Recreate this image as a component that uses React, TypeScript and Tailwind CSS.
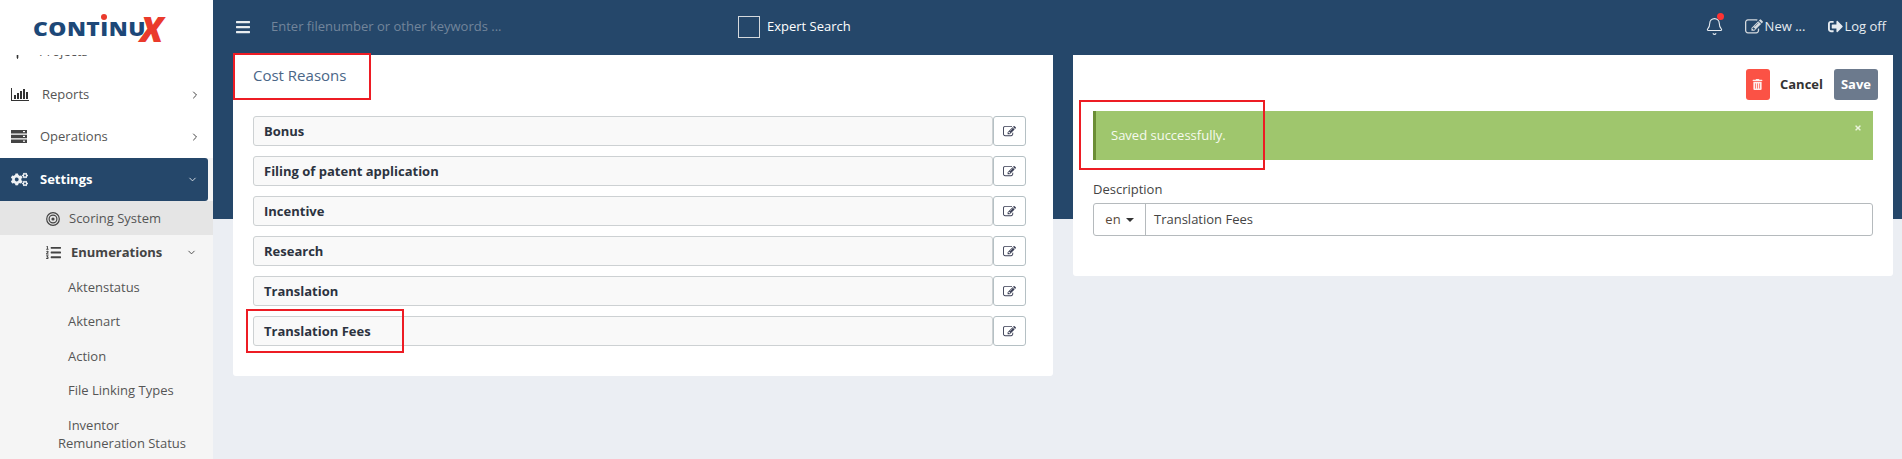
import React from "react";
import { FaBars, FaCogs, FaListOl, FaSignOutAlt, FaThumbtack, FaTrashAlt, FaTimes } from "react-icons/fa";
import { Bell, ChevronDown, ChevronRight } from "lucide-react";

const font = { fontFamily: '"Open Sans", sans-serif' };

function PencilSquare({ size, className }: { size: number; className?: string }) {
  return (
    <svg width={size} height={size} viewBox="0 0 1792 1792" fill="currentColor" className={className}>
      <path d="M888 1184l116-116-152-152-116 116v56h96v96h56zm440-720q-16-16-33 1l-350 350q-17 17-1 33t33-1l350-350q17-17 1-33zm80 594v190q0 119-84.5 203.5t-203.5 84.5h-832q-119 0-203.5-84.5t-84.5-203.5v-832q0-119 84.5-203.5t203.5-84.5h832q63 0 117 25 15 7 18 23 3 17-9 29l-49 49q-14 14-32 8-23-6-45-6h-832q-66 0-113 47t-47 113v832q0 66 47 113t113 47h832q66 0 113-47t47-113v-126q0-13 9-22l64-64q15-15 35-7t20 29zm-96-738l288 288-672 672h-288v-288zm444 132l-92 92-288-288 92-92q28-28 68-28t68 28l152 152q28 28 28 68t-28 68z" />
    </svg>
  );
}

function BarsIcon() {
  return (
    <svg width="18" height="13" viewBox="0 0 18 13" className="text-[#333]" fill="currentColor">
      <path d="M0 0h1v12h17v1H0z" />
      <rect x="3" y="7" width="2" height="4" />
      <rect x="6" y="5" width="2" height="6" />
      <rect x="9" y="3" width="2" height="8" />
      <rect x="12" y="1" width="2" height="10" />
      <rect x="15" y="4" width="2" height="7" />
    </svg>
  );
}

function ServerIcon() {
  return (
    <svg width="16" height="13" viewBox="0 0 16 13" className="text-[#444]" fill="currentColor">
      <path d="M0 0h16v3.5H0zM0 4.7h16v3.5H0zM0 9.4h16V13H0z" />
      <rect x="12" y="1" width="2" height="1.2" fill="#fff" />
      <rect x="12" y="5.8" width="2" height="1.2" fill="#fff" />
      <rect x="12" y="10.6" width="2" height="1.2" fill="#fff" />
    </svg>
  );
}

function TargetIcon() {
  return (
    <svg width="14" height="14" viewBox="0 0 14 14" fill="none" stroke="#444">
      <circle cx="7" cy="7" r="6.3" strokeWidth="1.2" />
      <circle cx="7" cy="7" r="3.9" strokeWidth="1.2" />
      <circle cx="7" cy="7" r="1.6" fill="#444" stroke="none" />
    </svg>
  );
}

function Logo() {
  return (
    <div className="h-[55px] shrink-0 bg-white flex items-center pl-[33px]">
      <div className="relative flex items-baseline leading-none">
        <span className="text-[20px] font-extrabold text-[#1d4878] tracking-[0.4px] [transform:scaleX(1.14)] origin-left inline-block w-[107px]">
          CONTINU
        </span>
        <span className="text-[35px] font-extrabold italic text-[#ea3a2c] leading-none -my-[12px] translate-y-[6px]">X</span>
        <span className="absolute left-[68px] -top-[3px] w-[6px] h-[6px] rounded-full bg-[#ea3a2c]" />
      </div>
    </div>
  );
}

function Sidebar() {
  const subs = ["Aktenstatus", "Aktenart", "Action", "File Linking Types"];
  return (
    <aside className="w-[213px] shrink-0 h-[459px] flex flex-col bg-white overflow-hidden text-[13px] text-[#555]">
      <Logo />
      <nav className="flex-1 overflow-hidden flex flex-col">
        <div className="h-[42px] shrink-0 -mt-[24px] flex items-center pl-[11px]">
          <span className="w-[28px]"><FaThumbtack size={13} className="text-[#333]" /></span>
          Projects
        </div>
        <div className="h-[42px] shrink-0 flex items-center pt-[1px] pl-[11px] pr-[12px]">
          <span className="w-[31px]"><BarsIcon /></span>
          <span className="flex-1">Reports</span>
          <ChevronRight size={12} className="text-[#444]" />
        </div>
        <div className="h-[43px] shrink-0 flex items-center pl-[11px] pr-[12px]">
          <span className="w-[29px]"><ServerIcon /></span>
          <span className="flex-1">Operations</span>
          <ChevronRight size={12} className="text-[#444]" />
        </div>
        <div className="bg-[#f5f5f5] flex-1 flex flex-col">
          <div className="w-[208px] h-[43px] shrink-0 bg-[#25476a] rounded-r-[3px] text-white font-bold flex items-center pl-[11px] pr-[10px]">
            <FaCogs size={17} className="mr-[12px] text-[#eef1f4]" />
            <span className="flex-1">Settings</span>
            <ChevronDown size={11} className="text-[#dfe5ea]" />
          </div>
          <div className="h-[34px] shrink-0 bg-[#e5e5e5] flex items-center pt-[1px] pl-[46px]">
            <TargetIcon />
            <span className="ml-[9px]">Scoring System</span>
          </div>
          <div className="h-[35px] shrink-0 flex items-center pl-[46px] pr-[16px] font-bold text-[#444]">
            <FaListOl size={15} className="mr-[10px]" />
            <span className="flex-1">Enumerations</span>
            <ChevronDown size={11} />
          </div>
          {subs.map((s) => (
            <div key={s} className="h-[34.5px] shrink-0 flex items-center pl-[68px]">{s}</div>
          ))}
          <div className="pl-[58px] pt-[8px] pr-[10px] leading-[18px] indent-[10px]">Inventor Remuneration Status</div>
        </div>
      </nav>
    </aside>
  );
}

function Header() {
  return (
    <header className="h-[55px] shrink-0 flex items-center pb-[2px] pl-[22px] pr-[16px] text-[13px] text-[#e6ebf0]">
      <FaBars size={16} className="text-[#e8ecef]" />
      <span className="ml-[20px] w-[467px] text-[#72859b]">Enter filenumber or other keywords ...</span>
      <span className="w-[22px] h-[22px] border border-[#d5d9dd]" />
      <span className="ml-[7px] flex-1 text-white">Expert Search</span>
      <div className="relative mr-[21px]">
        <Bell size={19} strokeWidth={1.4} className="text-[#e6ebf0]" />
        <span className="absolute -top-[4px] left-[12px] w-[7px] h-[7px] rounded-full bg-[#f33]" />
      </div>
      <PencilSquare size={18} className="mr-[2px] text-[#d5dade]" />
      <span className="mr-[23px]">New ...</span>
      <FaSignOutAlt size={15} className="mr-[1px]" />
      <span>Log off</span>
    </header>
  );
}

function Row({ label, annotate }: { label: string; annotate?: boolean }) {
  return (
    <div className="relative flex h-[30px] mb-[10px]">
      <div className="flex-1 bg-[#f9f9f9] border border-[#cdd1d3] rounded-[3px] flex items-center pt-[1px] pl-[10px] font-bold text-[#2c3340]">
        {label}
      </div>
      <button className="w-[33px] bg-white border border-[#b5c0c4] rounded-[3px] flex items-center justify-center text-[#3b3f55]">
        <PencilSquare size={13} />
      </button>
      {annotate && (
        <span className="absolute -left-[7px] -top-[7px] w-[158px] h-[44px] border-2 border-[#ed1c24] pointer-events-none" />
      )}
    </div>
  );
}

function LeftCard() {
  const rows = ["Bonus", "Filing of patent application", "Incentive", "Research", "Translation"];
  return (
    <section className="relative w-[820px] h-[321px] bg-white rounded-b-[3px] text-[13px]">
      <h2 className="h-[40px] mb-[21px] flex items-center pl-[20px] text-[15px] font-normal text-[#4a6687]">Cost Reasons</h2>
      <span className="absolute left-0 -top-[2px] w-[138px] h-[47px] border-2 border-[#ed1c24] pointer-events-none" />
      <div className="pl-[20px] pr-[27px]">
        {rows.map((r) => (
          <Row key={r} label={r} />
        ))}
        <Row label="Translation Fees" annotate />
      </div>
    </section>
  );
}

function RightCard() {
  return (
    <section className="w-[820px] h-[221px] bg-white rounded-b-[3px] text-[13px] pl-[20px] pr-[20px] pt-[14px]">
      <div className="flex items-center justify-end -mr-[5px] h-[31px]">
        <button className="w-[24px] h-[31px] rounded-[3px] bg-[#fb5245] text-white flex items-center justify-center">
          <FaTrashAlt size={11} className="opacity-90" />
        </button>
        <span className="ml-[10px] font-bold text-[#333]">Cancel</span>
        <button className="ml-[11px] w-[44px] h-[31px] rounded-[3px] bg-[#6c7a8d] text-white font-bold">Save</button>
      </div>
      <div className="relative mt-[11px] h-[49px] bg-[#9fc66d] border-l-[3px] border-[#6b8e35] flex items-center pl-[15px] text-[#f6faef]">
        Saved successfully.
        <FaTimes size={8} className="absolute right-[11px] top-[13px] text-[#eaf3dc]" />
        <span className="absolute -left-[17px] -top-[11px] w-[186px] h-[70px] border-2 border-[#ed1c24] pointer-events-none" />
      </div>
      <label className="block mt-[20px] h-[18px] leading-[18px] text-[#444]">Description</label>
      <div className="mt-[5px] flex h-[33px] border border-[#b5babd] rounded-[3px] text-[#444]">
        <div className="w-[52px] border-r border-[#b5babd] flex items-center justify-center gap-[5px] text-[#5a4a3a]">
          en
          <span className="w-0 h-0 border-x-[4px] border-x-transparent border-t-[4px] border-t-[#333]" />
        </div>
        <div className="flex-1 flex items-center pl-[8px]">Translation Fees</div>
      </div>
    </section>
  );
}

export default function App() {
  return (
    <div className="w-[1902px] h-[459px] flex overflow-hidden" style={font}>
      <Sidebar />
      <main className="flex-1 flex flex-col bg-[linear-gradient(#25476a_219px,#ebeef3_219px)]">
        <Header />
        <div className="flex items-start gap-[20px] pl-[20px]">
          <LeftCard />
          <RightCard />
        </div>
      </main>
    </div>
  );
}
